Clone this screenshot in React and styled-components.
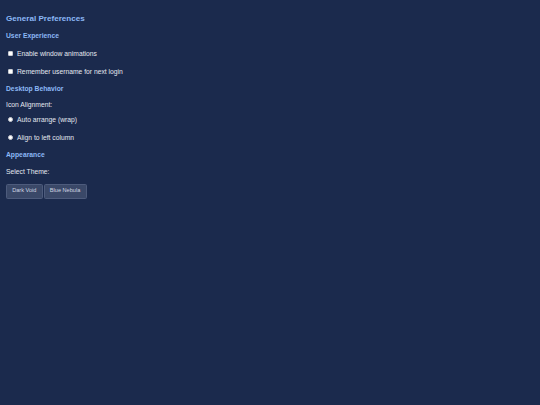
import React from "react";
import styled, { createGlobalStyle } from "styled-components";

const Global = createGlobalStyle`
  html, body { margin: 0; padding: 0; background: #1b2a4d; }
  body { font-family: "Liberation Sans", Arial, sans-serif; }
`;

const Panel = styled.div`
  width: 540px;
  height: 405px;
  box-sizing: border-box;
  padding: 14px 6px 0 6px;
  background: #1b2a4d;
  color: #e4e8f0;
  display: flex;
  flex-direction: column;
  align-items: flex-start;
`;

const Title = styled.h2`
  margin: 0;
  font-size: 8.1px;
  line-height: 10px;
  font-weight: bold;
  color: #8cb8f6;
`;

const SectionHeading = styled.h3`
  margin: ${(p) => p.$mt ?? 8}px 0 0 0;
  font-size: 6.75px;
  line-height: 9px;
  font-weight: bold;
  color: #8cb8f6;
`;

const Label = styled.div`
  margin-top: ${(p) => p.$mt ?? 7.5}px;
  font-size: 6.75px;
  line-height: 9px;
`;

const OptionGroup = styled.div`
  display: flex;
  flex-direction: column;
  gap: ${(p) => p.$gap}px;
  margin-top: ${(p) => p.$mt}px;
`;

const Option = styled.label`
  display: flex;
  align-items: center;
  gap: 4px;
  padding-left: 2px;
  font-size: 6.75px;
  line-height: 9px;
`;

const Box = styled.span`
  display: inline-block;
  width: 5px;
  height: 5px;
  box-sizing: border-box;
  background: #ffffff;
  border: 0.5px solid #c8cbd2;
  border-radius: ${(p) => (p.$round ? "50%" : "1px")};
`;

const ButtonRow = styled.div`
  display: flex;
  gap: 1px;
  margin-top: 8px;
`;

const ThemeButton = styled.button`
  height: 15px;
  padding: 0 5.2px;
  box-sizing: border-box;
  background: #3a4868;
  border: 0.5px solid #4d5b7c;
  border-radius: 1.5px;
  color: #d0d6e2;
  font-family: "Liberation Sans", Arial, sans-serif;
  font-size: 5.6px;
  line-height: 1;
  cursor: pointer;
`;

export default function App() {
  return (
    <>
      <Global />
      <Panel>
        <Title>General Preferences</Title>

        <SectionHeading $mt={7}>User Experience</SectionHeading>
        <OptionGroup $gap={9} $mt={8.5}>
          <Option>
            <Box />
            Enable window animations
          </Option>
          <Option>
            <Box />
            Remember username for next login
          </Option>
        </OptionGroup>

        <SectionHeading>Desktop Behavior</SectionHeading>
        <Label $mt={7}>Icon Alignment:</Label>
        <OptionGroup $gap={9.5} $mt={6}>
          <Option>
            <Box $round />
            Auto arrange (wrap)
          </Option>
          <Option>
            <Box $round />
            Align to left column
          </Option>
        </OptionGroup>

        <SectionHeading>Appearance</SectionHeading>
        <Label>Select Theme:</Label>
        <ButtonRow>
          <ThemeButton>Dark Void</ThemeButton>
          <ThemeButton>Blue Nebula</ThemeButton>
        </ButtonRow>
      </Panel>
    </>
  );
}
